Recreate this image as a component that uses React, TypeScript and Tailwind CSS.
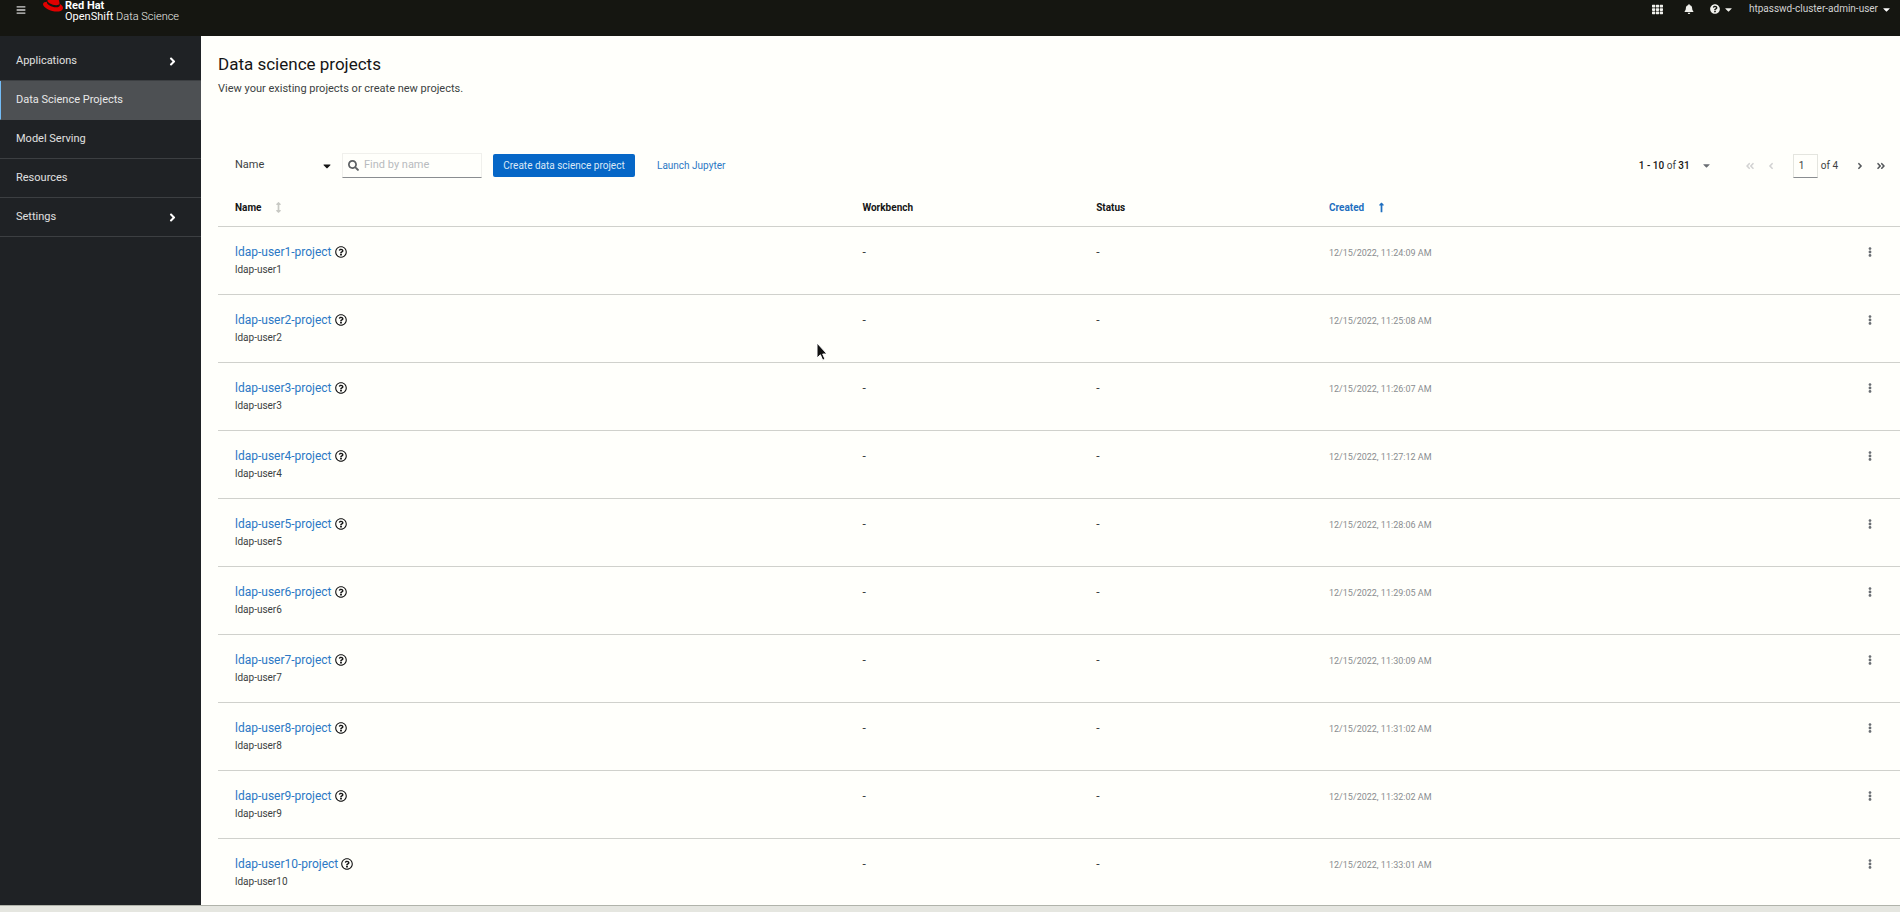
import {
  FaAngleDoubleLeft,
  FaAngleDoubleRight,
  FaAngleLeft,
  FaAngleRight,
  FaArrowsAltV,
  FaBars,
  FaBell,
  FaCaretDown,
  FaEllipsisV,
  FaLongArrowAltUp,
  FaQuestionCircle,
  FaRedhat,
  FaRegQuestionCircle,
  FaSearch,
  FaTh,
} from "react-icons/fa";

const navItems = [
  { label: "Applications", expandable: true },
  { label: "Data Science Projects", active: true },
  { label: "Model Serving" },
  { label: "Resources" },
  { label: "Settings", expandable: true },
];

const projects = [
  { user: "ldap-user1", created: "12/15/2022, 11:24:09 AM" },
  { user: "ldap-user2", created: "12/15/2022, 11:25:08 AM" },
  { user: "ldap-user3", created: "12/15/2022, 11:26:07 AM" },
  { user: "ldap-user4", created: "12/15/2022, 11:27:12 AM" },
  { user: "ldap-user5", created: "12/15/2022, 11:28:06 AM" },
  { user: "ldap-user6", created: "12/15/2022, 11:29:05 AM" },
  { user: "ldap-user7", created: "12/15/2022, 11:30:09 AM" },
  { user: "ldap-user8", created: "12/15/2022, 11:31:02 AM" },
  { user: "ldap-user9", created: "12/15/2022, 11:32:02 AM" },
  { user: "ldap-user10", created: "12/15/2022, 11:33:01 AM" },
];

function Header() {
  return (
    <header className="flex h-9 shrink-0 items-start overflow-hidden bg-[#151611] px-4 text-[#f0f0ec]">
      <button aria-label="Global navigation" className="mt-1 flex h-3 w-[10px] items-center justify-center text-[#d2d2d2]">
        <FaBars size={10} />
      </button>
      <a href="#" className="ml-[17px] flex items-start">
        <FaRedhat size={20} className="-mt-[6px] text-[#e00000]" />
        <span className="ml-[2px] block text-[11px] leading-[11px]">
          <span className="block font-bold text-white">Red Hat</span>
          <span className="block">
            <span className="text-white">OpenShift</span> <span className="font-light">Data Science</span>
          </span>
        </span>
      </a>

      <div className="ml-auto mt-[3px] flex h-3 items-center">
        <button aria-label="Applications" className="mr-[21px]">
          <FaTh size={11} />
        </button>
        <button aria-label="Notifications" className="mr-4">
          <FaBell size={10} />
        </button>
        <button aria-label="Help" className="mr-[15px] flex items-center gap-[3px]">
          <FaQuestionCircle size={10} />
          <FaCaretDown size={11} />
        </button>
        <button className="-mr-2 flex items-center gap-[3px] text-[10px] leading-3 text-[#d2d2d2]">
          htpasswd-cluster-admin-user
          <FaCaretDown size={11} className="text-white" />
        </button>
      </div>
    </header>
  );
}

function Sidebar() {
  return (
    <nav aria-label="Global" className="w-[201px] shrink-0 bg-[#1f2225] pt-[6px]">
      <ul>
        {navItems.map((item) => (
          <li key={item.label}>
            <a
              href="#"
              aria-current={item.active ? "page" : undefined}
              className={
                item.active
                  ? "flex h-[39px] items-center border-b border-l border-b-[#4d5053] border-l-[#73bcf7] bg-[#4d5053] pl-[15px] pt-px text-[11px] text-[#e8e8e8]"
                  : "flex h-[39px] items-center justify-between border-b border-[#3c3f42] pl-4 pr-[22px] pt-px text-[11px] text-[#e0e0e0]"
              }
            >
              {item.label}
              {item.expandable && <FaAngleRight size={13} className="text-white" />}
            </a>
          </li>
        ))}
      </ul>
    </nav>
  );
}

function Toolbar() {
  return (
    <div className="mt-[55px] flex h-[25px] items-center pl-[17px]">
      <div className="relative flex w-[99px] items-center">
        <select aria-label="Filter by" className="w-full appearance-none bg-transparent text-[11px] text-[#3c3f42]">
          <option>Name</option>
        </select>
        <FaCaretDown size={12} className="pointer-events-none absolute right-px text-[#151515]" />
      </div>
      <label className="ml-2 flex h-[25px] w-[140px] items-center gap-[5px] border border-b-[#8a8d90] border-[#f0f0ec] px-[5px]">
        <FaSearch size={11} className="shrink-0 text-[#5d6063]" />
        <input
          type="search"
          aria-label="Find by name"
          placeholder="Find by name"
          className="w-full min-w-0 bg-transparent text-[11px] outline-none placeholder:text-[#b8bbbe]"
        />
      </label>
      <button className="ml-[11px] h-[23px] w-[142px] whitespace-nowrap rounded-xs bg-[#0667c7] text-[10px] text-[#dbe9f7]">
        Create data science project
      </button>
      <a href="#" className="ml-[22px] text-[10px] text-[#2b78c5]">
        Launch Jupyter
      </a>
      <Pagination />
    </div>
  );
}

function Pagination() {
  return (
    <div className="ml-auto flex items-center pr-[14px] text-[10px] text-[#3c3f42]">
      <button className="flex items-center gap-[11px]">
        <span>
          <b className="font-medium text-[#151515]">1 - 10</b> of <b className="font-medium text-[#151515]">31</b>
        </span>
        <FaCaretDown size={11} className="text-[#6a6e73]" />
      </button>
      <button disabled aria-label="First page" className="ml-[33px] text-[#d2d2d2]">
        <FaAngleDoubleLeft size={10} />
      </button>
      <button disabled aria-label="Previous page" className="ml-[11px] text-[#d2d2d2]">
        <FaAngleLeft size={10} />
      </button>
      <input
        aria-label="Current page"
        defaultValue="1"
        className="ml-[17px] h-6 w-[25px] border border-b-[#8a8d90] border-[#e4e5df] bg-transparent pl-[5px] outline-none"
      />
      <span className="ml-[3px]">of 4</span>
      <button aria-label="Next page" className="ml-[17px] text-[#55585b]">
        <FaAngleRight size={10} />
      </button>
      <button aria-label="Last page" className="ml-[11px] text-[#55585b]">
        <FaAngleDoubleRight size={10} />
      </button>
    </div>
  );
}

function ProjectsTable() {
  return (
    <table className="mt-[10px] w-full table-fixed border-collapse text-left">
      <colgroup>
        <col className="w-[37.3%]" />
        <col className="w-[13.9%]" />
        <col className="w-[13.9%]" />
        <col />
        <col className="w-12" />
      </colgroup>
      <thead>
        <tr className="h-[38px] border-b border-[#d0d1cc] text-[10px] text-[#151515]">
          <th className="pl-[17px] pt-px font-bold">
            <button className="flex items-center gap-3">
              Name <FaArrowsAltV size={11} className="text-[#c8c9c4]" />
            </button>
          </th>
          <th className="pl-[17px] pt-px font-bold">Workbench</th>
          <th className="pl-[17px] pt-px font-bold">Status</th>
          <th aria-sort="ascending" className="pl-4 pt-px font-bold text-[#1f6fc0]">
            <button className="flex items-center gap-3">
              Created <FaLongArrowAltUp size={11} />
            </button>
          </th>
          <td />
        </tr>
      </thead>
      <tbody>
        {projects.map((project) => (
          <tr key={project.user} className="h-[68px] border-b border-[#d0d1cc] align-top text-xs leading-[18px] text-[#3c3f42]">
            <td className="pl-[17px] pt-4">
              <div className="flex items-center gap-[3px]">
                <a href="#" className="leading-[18px] text-[#2b78c5]">
                  {project.user}-project
                </a>
                <button aria-label="Resource details">
                  <FaRegQuestionCircle size={12} className="text-[#151515]" />
                </button>
              </div>
              <div className="text-[10px] leading-[18px]">{project.user}</div>
            </td>
            <td className="pl-[17px] pt-4">-</td>
            <td className="pl-[17px] pt-4">-</td>
            <td className="pl-4 pt-[17px] text-[9px] leading-[18px] text-[#8a8d90]">{project.created}</td>
            <td className="pt-4">
              <button aria-label="Actions" className="ml-[13px] flex h-[18px] items-center">
                <FaEllipsisV size={10} className="text-[#6a6e73]" />
              </button>
            </td>
          </tr>
        ))}
      </tbody>
    </table>
  );
}

function Pointer() {
  return (
    <svg viewBox="0 0 12 20" className="pointer-events-none absolute left-[816px] top-[342px] h-5 w-3">
      <path d="M1 1v15l3.4-3.2 2.3 5.4 2.3-1-2.3-5.2H11z" fill="#111" stroke="#fff" strokeWidth="1" />
    </svg>
  );
}

export default function App() {
  return (
    <div className="relative flex h-screen flex-col overflow-hidden bg-[#fffffb] font-['Roboto',sans-serif]">
      <Header />
      <div className="flex min-h-0 flex-1">
        <Sidebar />
        <main className="min-w-0 flex-1 overflow-hidden pl-[17px] pt-4">
          <h1 className="text-[17px] leading-6 text-[#151515]">Data science projects</h1>
          <p className="mt-1 text-[11px] leading-[18px] text-[#3c3f42]">
            View your existing projects or create new projects.
          </p>
          <Toolbar />
          <ProjectsTable />
        </main>
      </div>
      <footer className="h-[7px] shrink-0 border-t border-[#b0b3aa] bg-[#e5e6e0]" />
      <Pointer />
    </div>
  );
}
